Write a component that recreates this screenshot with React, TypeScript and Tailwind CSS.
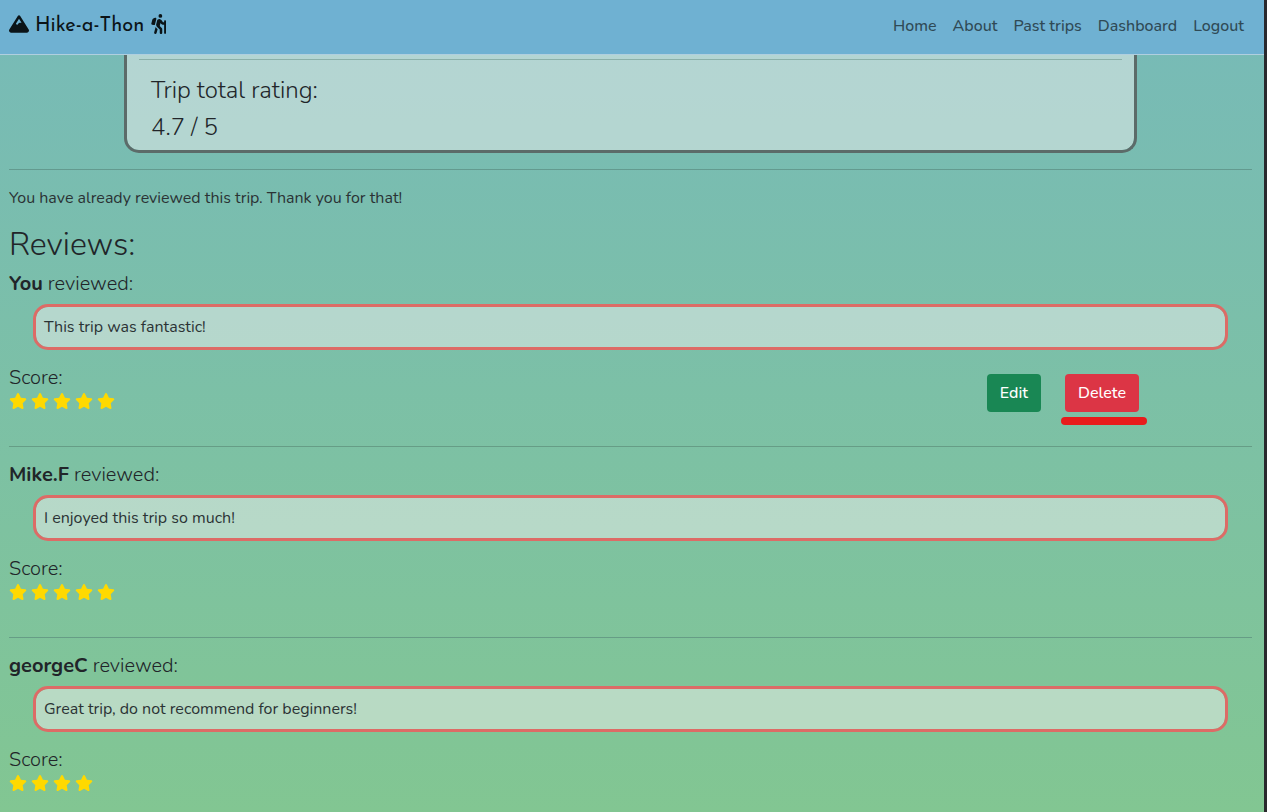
import { FaMountain, FaPersonHiking, FaStar } from "react-icons/fa6";

type Review = {
  author: string;
  text: string;
  score: number;
  own?: boolean;
};

const navLinks = ["Home", "About", "Past trips", "Dashboard", "Logout"];

const reviews: Review[] = [
  { author: "You", text: "This trip was fantastic!", score: 5, own: true },
  { author: "Mike.F", text: "I enjoyed this trip so much!", score: 5 },
  { author: "georgeC", text: "Great trip, do not recommend for beginners!", score: 4 },
];

function Navbar() {
  return (
    <header className="sticky top-0 z-10 flex h-[55px] items-center justify-between border-b border-[#b0cfdf] bg-[#6fb1d2] pl-[9px] pr-5">
      <a
        href="#"
        className="flex items-center gap-[6px] pb-[6px] font-['Josefin_Sans','Lato',sans-serif] text-[20px] font-normal leading-6 text-[#0b1418]"
      >
        <FaMountain className="size-5" />
        <span className="pt-1">Hike-a-Thon</span>
        <FaPersonHiking className="h-5 w-[17px]" />
      </a>
      <nav className="flex gap-4 pb-[2px] text-[16px] font-medium leading-6 text-[#2f4a56]">
        {navLinks.map((label) => (
          <a key={label} href="#">
            {label}
          </a>
        ))}
      </nav>
    </header>
  );
}

function TripRating() {
  return (
    <section className="mx-[115px] rounded-b-[15px] border-x-[3px] border-b-[3px] border-[#5c6b69] bg-[#efefef]/50 bg-clip-padding px-3 pb-2 pt-1">
      <hr className="mb-4 border-[#8bb0a9]" />
      <div className="px-3 text-[24px] leading-[29px]">
        <h3 className="mb-2">Trip total rating:</h3>
        <p>4.7 / 5</p>
      </div>
    </section>
  );
}

function Stars({ count }: { count: number }) {
  return (
    <div className="flex h-6 items-center gap-1 pb-[2px] text-[#ffd900]" role="img" aria-label={`${count} stars`}>
      {Array.from({ length: count }, (_, i) => (
        <FaStar key={i} className="h-4 w-[18px]" />
      ))}
    </div>
  );
}

function OwnActions() {
  return (
    <div className="mr-[113px] mt-2 flex items-start gap-6 text-[16px] font-medium leading-6 text-white">
      <button type="button" className="rounded bg-[#198754] px-[13px] py-[7px]">
        Edit
      </button>
      <div className="relative">
        <button type="button" className="rounded bg-[#dc3545] px-[13px] py-[7px]">
          Delete
        </button>
        <span className="absolute -left-1 -right-2 top-[43px] h-2 rounded-full bg-[#e81c1c]" />
      </div>
    </div>
  );
}

function ReviewItem({ review }: { review: Review }) {
  return (
    <article>
      <h4 className="mb-2 text-[20px] leading-6">
        <strong className="font-bold">{review.author}</strong> reviewed:
      </h4>
      <p className="mx-6 mb-4 rounded-[15px] border-[3px] border-[#dd6b66] bg-[#efefef]/50 bg-clip-padding p-2 text-[16px] font-normal leading-6 text-[#2b3335]">
        {review.text}
      </p>
      <div className="flex h-12 items-start justify-between">
        <div>
          <h5 className="text-[20px] leading-6">Score:</h5>
          <Stars count={review.score} />
        </div>
        {review.own && <OwnActions />}
      </div>
    </article>
  );
}

export default function App() {
  return (
    <div className="min-h-screen border-r-[3px] border-[#29292d] bg-linear-to-b from-[#77bab8] to-[#82c692] font-['Nunito','Lato',sans-serif] font-light text-[#212529]">
      <Navbar />
      <main className="pl-[9px] pr-3">
        <TripRating />
        <hr className="my-4 border-[#639a8f]" />
        <p className="mb-4 text-[16px] font-normal leading-6 text-[#2b3335]">
          You have already reviewed this trip. Thank you for that!
        </p>
        <h2 className="mb-2 text-[32px] leading-[38px]">Reviews:</h2>
        {reviews.map((review, i) => (
          <div key={review.author}>
            {i > 0 && <hr className="mb-4 mt-8 border-[#669d86]" />}
            <ReviewItem review={review} />
          </div>
        ))}
      </main>
    </div>
  );
}
